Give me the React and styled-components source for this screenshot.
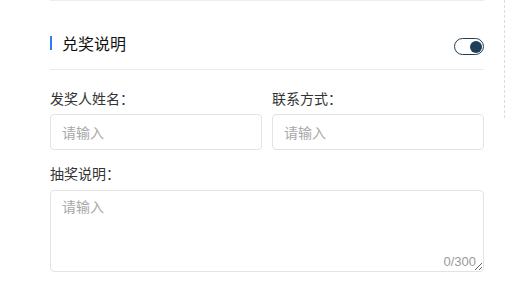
import React from "react";
import styled, { createGlobalStyle } from "styled-components";

const Global = createGlobalStyle`
  html, body { margin: 0; padding: 0; background: #fff; }
  body { font-family: "Noto Sans CJK SC", "Noto Sans", sans-serif; }
  * { box-sizing: border-box; }
`;

const Page = styled.div`
  display: flex;
  align-items: flex-start;
  padding-left: 50px;
`;

const Panel = styled.div`
  width: 434px;
  display: flex;
  flex-direction: column;
  border-top: 1px solid #ededed;
`;

const SideRule = styled.div`
  margin-left: 20px;
  width: 0;
  height: 118px;
  border-left: 1px dashed #dcdcdc;
`;

const Header = styled.div`
  display: flex;
  justify-content: space-between;
  align-items: flex-start;
  height: 69px;
  padding-top: 31px;
  border-bottom: 1px solid #ebebeb;
`;

const Title = styled.div`
  display: flex;
  align-items: center;
  gap: 10px;
  font-size: 16px;
  line-height: 22px;
  color: #111;
  &::before {
    content: "";
    width: 2px;
    height: 14px;
    background: #2f7cf6;
  }
`;

const Toggle = styled.span`
  margin-top: 6px;
  width: 30px;
  height: 17px;
  border: 1.5px solid #1e3f57;
  border-radius: 9px;
  display: flex;
  align-items: center;
  justify-content: flex-end;
  padding-right: 1px;
  &::after {
    content: "";
    width: 12px;
    height: 12px;
    border-radius: 50%;
    background: #1e3f57;
  }
`;

const Form = styled.div`
  padding-top: 18px;
  display: flex;
  flex-direction: column;
`;

const Row = styled.div`
  display: grid;
  grid-template-columns: 1fr 1fr;
  column-gap: 10px;
`;

const Field = styled.div`
  display: flex;
  flex-direction: column;
  gap: 6px;
  margin-bottom: ${(p) => p.$mb || 0}px;
`;

const Label = styled.label`
  font-size: 14px;
  line-height: 20px;
  color: #333;
`;

const Input = styled.input`
  height: 36px;
  width: 100%;
  border: 1px solid #e3e3e3;
  border-radius: 4px;
  padding: 0 11px;
  font-family: inherit;
  font-size: 14px;
  color: #333;
  outline: none;
  &::placeholder { color: #a8a8a8; }
`;

const AreaWrap = styled.div`
  position: relative;
  margin-top: 1px;
`;

const Area = styled.textarea`
  display: block;
  width: 100%;
  height: 82px;
  border: 1px solid #e3e3e3;
  border-radius: 4px;
  padding: 5px 11px;
  font-family: inherit;
  font-size: 14px;
  line-height: 20px;
  color: #333;
  outline: none;
  resize: vertical;
  &::placeholder { color: #a8a8a8; }
`;

const Count = styled.span`
  position: absolute;
  right: 8px;
  bottom: 2px;
  font-family: "Liberation Sans", Arial, sans-serif;
  font-size: 13px;
  line-height: 16px;
  color: #9a9a9a;
`;

export default function App() {
  return (
    <>
      <Global />
      <Page>
        <Panel>
          <Header>
            <Title>兑奖说明</Title>
            <Toggle />
          </Header>
          <Form>
            <Row>
              <Field $mb={13}>
                <Label>发奖人姓名：</Label>
                <Input placeholder="请输入" />
              </Field>
              <Field $mb={13}>
                <Label>联系方式：</Label>
                <Input placeholder="请输入" />
              </Field>
            </Row>
            <Field>
              <Label>抽奖说明：</Label>
              <AreaWrap>
                <Area placeholder="请输入" />
                <Count>0/300</Count>
              </AreaWrap>
            </Field>
          </Form>
        </Panel>
        <SideRule />
      </Page>
    </>
  );
}
